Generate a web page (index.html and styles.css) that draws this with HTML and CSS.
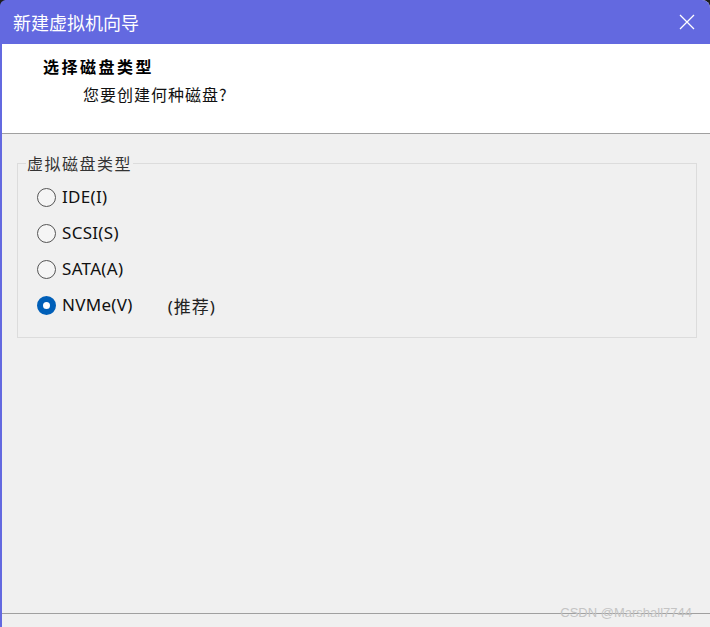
FILE: index.html
```html
<!DOCTYPE html>
<html>
<head>
    <title>新建虚拟机向导</title>
    <link rel="stylesheet" href="styles.css">
</head>
<body>

    <div class="window">
        <div class="titlebar">
            <span class="title">新建虚拟机向导</span>
            <svg class="close" width="16" height="16" viewBox="0 0 16 16">
                <path d="M1 1 L15 15 M15 1 L1 15" stroke="#ffffff" stroke-width="1.3" fill="none"/>
            </svg>
        </div>

        <div class="header">
            <div class="header-title">选择磁盘类型</div>
            <div class="header-sub">您要创建何种磁盘?</div>
        </div>

        <div class="content">
            <fieldset class="group">
                <legend>虚拟磁盘类型</legend>
                <div class="option">
                    <span class="radio"></span>
                    <span class="label">IDE(I)</span>
                </div>
                <div class="option">
                    <span class="radio"></span>
                    <span class="label">SCSI(S)</span>
                </div>
                <div class="option">
                    <span class="radio"></span>
                    <span class="label">SATA(A)</span>
                </div>
                <div class="option">
                    <span class="radio checked"></span>
                    <span class="label">NVMe(V)</span>
                    <span class="hint">(推荐)</span>
                </div>
            </fieldset>
        </div>

        <div class="footer">
            <span class="watermark">CSDN @Marshall7744</span>
        </div>
    </div>

</body>
</html>
```

FILE: styles.css
```css
html, body {
    margin: 0;
    background: #1e1e1e;
}

body {
    font-family: "Noto Sans", "Noto Sans CJK SC", sans-serif;
    color: #000;
}

.window {
    height: 627px;
    display: flex;
    flex-direction: column;
    background-color: #f0f0f0;
    border-left: 2px solid #6369e0;
    border-radius: 8px 8px 0 0;
    box-sizing: border-box;
}

.titlebar {
    height: 44px;
    background-color: #6369e0;
    border-radius: 6px 8px 0 0;
    margin-left: -2px;
    display: flex;
    align-items: center;
    justify-content: space-between;
    padding: 0 15px 0 13px;
    flex-shrink: 0;
}

.title {
    color: #ffffff;
    font-family: "Noto Sans CJK SC", sans-serif;
    font-size: 18px;
    line-height: 20px;
    margin-top: -1px;
}

.close {
    display: block;
}

.header {
    height: 89px;
    background-color: #ffffff;
    border-bottom: 1px solid #a0a0a0;
    flex-shrink: 0;
}

.header-title {
    font-family: "Noto Sans CJK SC", sans-serif;
    font-weight: bold;
    font-size: 16px;
    letter-spacing: 2.5px;
    line-height: 20px;
    margin: 12px 0 0 41px;
}

.header-sub {
    font-family: "Noto Sans CJK SC", sans-serif;
    font-size: 16px;
    letter-spacing: 1px;
    line-height: 20px;
    margin: 8px 0 0 81px;
    color: #111;
}

.content {
    flex: 1;
}

.group {
    margin: 20px 13px 0 15px;
    padding: 7px 0 14px 19px;
    border: 1px solid #dcdcdc;
    min-width: 0;
}

.group legend {
    font-family: "Noto Sans CJK SC", sans-serif;
    font-size: 16px;
    letter-spacing: 1.5px;
    line-height: 18px;
    color: #333;
    padding: 0 1px;
    margin-left: -11px;
}

.option {
    height: 36px;
    display: flex;
    align-items: center;
}

.radio {
    width: 19px;
    height: 19px;
    border: 1px solid #555;
    border-radius: 50%;
    background-color: #f5f5f5;
    box-sizing: border-box;
    flex-shrink: 0;
}

.radio.checked {
    border: 6px solid #005fb8;
    background-color: #ffffff;
}

.label {
    margin-left: 6px;
    font-size: 17px;
    letter-spacing: 0.3px;
    line-height: 20px;
    color: #111;
}

.hint {
    margin-left: 35px;
    font-size: 17px;
    letter-spacing: 1px;
    color: #222;
}

.footer {
    height: 13px;
    border-top: 1px solid #a0a0a0;
    position: relative;
    flex-shrink: 0;
}

.watermark {
    position: absolute;
    right: 18px;
    top: -8px;
    font-size: 13px;
    line-height: 14px;
    color: #c4c4c4;
    font-family: "Liberation Sans", sans-serif;
}
```
